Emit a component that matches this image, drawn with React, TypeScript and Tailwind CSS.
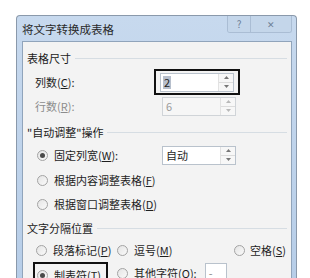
import React from "react";

const font = { fontFamily: '"Noto Sans CJK SC", "Noto Sans", sans-serif' };

function U({ children }: { children: React.ReactNode }) {
  return <span className="underline underline-offset-[1px]">{children}</span>;
}

function Radio({ checked = false }: { checked?: boolean }) {
  return (
    <div className="w-[11px] h-[11px] rounded-full border border-[#a3a3a3] bg-gradient-to-br from-[#e4e4e4] to-[#fafafa] flex items-center justify-center shrink-0">
      {checked && <div className="w-[5px] h-[5px] rounded-full bg-[#4a4a4a]" />}
    </div>
  );
}

function Spinner({ disabled = false }: { disabled?: boolean }) {
  const c = disabled ? "text-[#b8b8b8]" : "text-[#777]";
  return (
    <div className="flex flex-col w-[15px] h-full ml-auto border-l border-[#e2e2e2]">
      <div className={`flex-1 flex items-center justify-center border-b border-[#dcdcdc] bg-[#f7f7f7] ${c}`}>
        <svg width="5" height="3" viewBox="0 0 5 3"><path d="M0 3 L2.5 0 L5 3Z" fill="currentColor" /></svg>
      </div>
      <div className={`flex-1 flex items-center justify-center bg-[#f7f7f7] ${c}`}>
        <svg width="5" height="3" viewBox="0 0 5 3"><path d="M0 0 L2.5 3 L5 0Z" fill="currentColor" /></svg>
      </div>
    </div>
  );
}

function Heading({ text, h }: { text: React.ReactNode; h: string }) {
  return (
    <div className={`flex items-center ${h} pl-[4px] pr-[4px] text-[#1a1a1a]`}>
      <span className="whitespace-nowrap">{text}</span>
      <div className="flex-1 h-px bg-[#d6dde3] ml-[4px]" />
    </div>
  );
}

export default function App() {
  return (
    <div className="w-[310px] h-[278px] bg-white overflow-hidden text-[11px] leading-none" style={font}>
      <div className="ml-[16px] mt-[15px] w-[281px] h-[280px] border border-[#8a99ab] border-b-0 rounded-t-[4px] bg-gradient-to-b from-[#c7d9ee] to-[#b6cde8] flex flex-col">
        {/* title bar */}
        <div className="h-[25px] flex items-start relative">
          <div className="pl-[5px] pt-[8px] text-[11.5px] text-[#2a2a2a]">将文字转换成表格</div>
          <div className="ml-auto mr-[4px] flex h-[17px] border border-t-0 border-[#aabdd4] rounded-b-[3px] overflow-hidden">
            <div className="w-[23px] flex items-center justify-center border-r border-[#aabdd4] text-[#6d7f96] text-[10px] bg-[#c4d6ea]">?</div>
            <div className="w-[40px] flex items-center justify-center text-[#6d7f96] text-[9px] bg-[#c4d6ea]">✕</div>
          </div>
        </div>
        {/* content */}
        <div className="ml-[5px] mr-[4px] flex-1 bg-[#f3f3f3] border border-[#90a4bb] border-b-0 pt-[6px] text-[#1e1e1e]">
          <Heading text="表格尺寸" h="h-[20px]" />
          <div className="h-[28px] flex items-center">
            <span className="ml-[12px]">列数(<U>C</U>):</span>
            <div className="ml-auto mr-[51px] w-[86px] h-[26px] border-2 border-[#111] flex items-center justify-center">
              <div className="w-[74px] h-[19px] bg-white border border-[#b9c2cc] flex items-center">
                <span className="ml-[2px] px-[1px] bg-[#b7bfcc] text-[#222] leading-[13px]">2</span>
                <Spinner />
              </div>
            </div>
          </div>
          <div className="h-[20px] flex items-center text-[#8c8c8c]">
            <span className="ml-[12px]">行数(<U>R</U>):</span>
            <div className="ml-auto mr-[55px] w-[74px] h-[19px] bg-[#f6f6f6] border border-[#d0d4d8] flex items-center">
              <span className="ml-[3px] text-[#9a9a9a]">6</span>
              <Spinner disabled />
            </div>
          </div>
          <div className="h-[6px]" />
          <Heading text={'"自动调整"操作'} h="h-[20px]" />
          <div className="h-[26px] flex items-center">
            <div className="ml-[14px] flex items-center gap-[6px]">
              <Radio checked />
              <span>固定列宽(<U>W</U>):</span>
            </div>
            <div className="ml-auto mr-[55px] w-[74px] h-[19px] bg-white border border-[#b9c2cc] flex items-center">
              <span className="ml-[3px]">自动</span>
              <Spinner />
            </div>
          </div>
          <div className="h-[24px] flex items-center">
            <div className="ml-[14px] flex items-center gap-[6px]">
              <Radio />
              <span>根据内容调整表格(<U>F</U>)</span>
            </div>
          </div>
          <div className="h-[24px] flex items-center">
            <div className="ml-[14px] flex items-center gap-[6px]">
              <Radio />
              <span>根据窗口调整表格(<U>D</U>)</span>
            </div>
          </div>
          <Heading text="文字分隔位置" h="h-[24px]" />
          <div className="h-[20px] flex items-center">
            <div className="ml-[13px] w-[81px] flex items-center gap-[6px]">
              <Radio />
              <span>段落标记(<U>P</U>)</span>
            </div>
            <div className="w-[117px] flex items-center gap-[6px]">
              <Radio />
              <span>逗号(<U>M</U>)</span>
            </div>
            <div className="flex items-center gap-[5px]">
              <Radio />
              <span>空格(<U>S</U>)</span>
            </div>
          </div>
          <div className="h-[24px] flex items-start pt-[2px]">
            <div className="ml-[10px] w-[75px] h-[24px] border-2 border-[#111] border-b-0 flex items-center pl-[2px] gap-[6px]">
              <Radio checked />
              <span>制表符(<U>T</U>)</span>
            </div>
            <div className="ml-[9px] flex items-center gap-[6px] h-[22px]">
              <Radio />
              <span>其他字符(<U>O</U>):</span>
            </div>
            <div className="ml-[8px] mt-[1px] w-[22px] h-[20px] bg-white border border-[#b9c2cc] flex items-center pl-[3px] text-[#888]">-</div>
          </div>
        </div>
      </div>
    </div>
  );
}
